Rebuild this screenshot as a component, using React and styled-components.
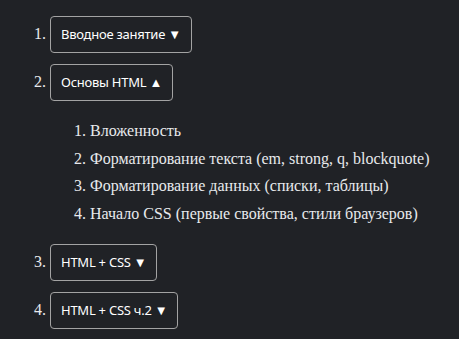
import React, { useState } from "react";
import styled, { createGlobalStyle } from "styled-components";

const GlobalStyle = createGlobalStyle`
  html, body {
    margin: 0;
    background: #202226;
  }
`;

const Page = styled.div`
  min-height: 100vh;
  background: #202226;
  color: #e8eaed;
  font-family: "Liberation Serif", "Times New Roman", serif;
  font-size: 16px;
  padding-top: 16px;
  box-sizing: border-box;
`;

const Lessons = styled.ol`
  margin: 0;
  padding-left: 50px;
  list-style: decimal;
`;

const Lesson = styled.li`
  margin-bottom: 11px;
`;

const ToggleBtn = styled.button`
  display: inline-block;
  background: transparent;
  color: #ffffff;
  border: 1px solid #a3a3a3;
  border-radius: 4px;
  padding: 9px 10px;
  font-family: "Noto Sans", "Open Sans", sans-serif;
  font-size: 13px;
  letter-spacing: -0.25px;
  line-height: 17px;
  cursor: pointer;
`;

const Topics = styled.ol`
  margin: 16px 0;
  padding-left: 40px;
  list-style: decimal;
`;

const Topic = styled.li`
  line-height: 27.67px;
`;

const lessons = [
  { title: "Вводное занятие", topics: [] },
  {
    title: "Основы HTML",
    topics: [
      "Вложенность",
      "Форматирование текста (em, strong, q, blockquote)",
      "Форматирование данных (списки, таблицы)",
      "Начало CSS (первые свойства, стили браузеров)",
    ],
  },
  { title: "HTML + CSS", topics: [] },
  { title: "HTML + CSS ч.2", topics: [] },
];

export default function App() {
  const [open, setOpen] = useState(1);

  return (
    <Page>
      <GlobalStyle />
      <Lessons>
        {lessons.map((lesson, i) => (
          <Lesson key={lesson.title}>
            <ToggleBtn onClick={() => setOpen(open === i ? -1 : i)}>
              {lesson.title} {open === i ? "▲" : "▼"}
            </ToggleBtn>
            {open === i && lesson.topics.length > 0 && (
              <Topics>
                {lesson.topics.map((t) => (
                  <Topic key={t}>{t}</Topic>
                ))}
              </Topics>
            )}
          </Lesson>
        ))}
      </Lessons>
    </Page>
  );
}
